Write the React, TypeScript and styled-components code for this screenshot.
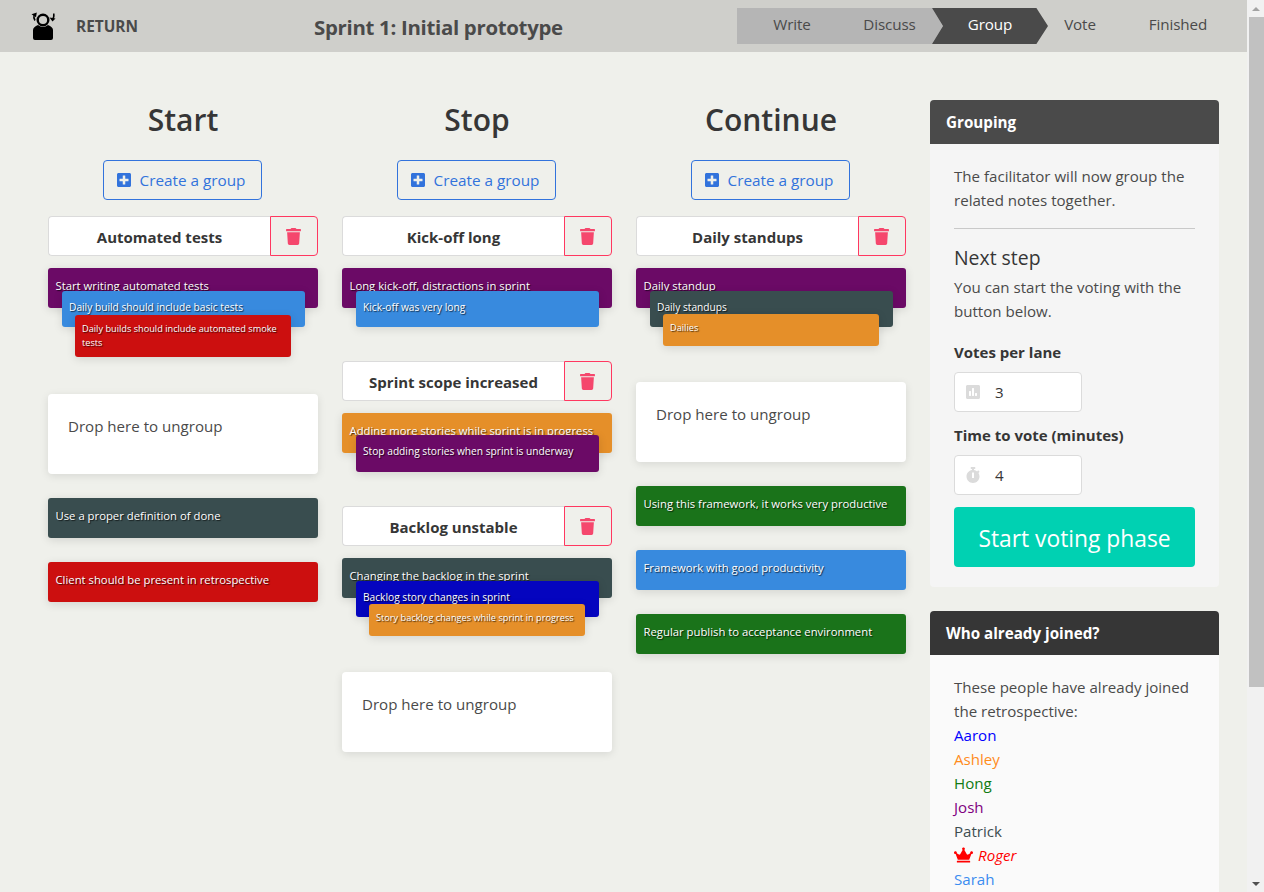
import React from "react";
import styled, { createGlobalStyle } from "styled-components";
import { FaCrown, FaPlusSquare, FaPoll, FaStopwatch, FaTrash } from "react-icons/fa";

const Global = createGlobalStyle`
  html, body { margin: 0; padding: 0; background: #eff0eb; }
  body { font-family: "Open Sans", "Noto Sans", "Liberation Sans", sans-serif; font-size: 15.1px; line-height: 24px; color: #4a4a4a; }
  * { box-sizing: border-box; }
`;

const ScrollBar = styled.div`
  position: fixed;
  top: 0;
  right: 0;
  bottom: 0;
  width: 17px;
  background: #f1f1f1;
  display: flex;
  flex-direction: column;
  align-items: flex-end;
  z-index: 5;
`;
const ScrollArrow = styled.div<{ $up?: boolean }>`
  width: 17px;
  height: 17px;
  flex: none;
  display: flex;
  align-items: center;
  justify-content: center;
  &::before {
    content: "";
    border-left: 4px solid transparent;
    border-right: 4px solid transparent;
    ${(p) => (p.$up ? "border-bottom: 4px solid #a3a3a3;" : "border-top: 4px solid #505050;")}
  }
`;
const ScrollThumb = styled.div`
  width: 15px;
  height: 670px;
  background: #c1c1c1;
`;
const ScrollRest = styled.div`
  flex: 1;
`;

const Header = styled.header`
  height: 52px;
  background: #cfcfcb;
  display: flex;
  align-items: center;
  padding: 0 20px 0 30px;
`;
const Return = styled.a`
  display: flex;
  align-items: center;
  gap: 18px;
  font-weight: 700;
  font-size: 15.4px;
  color: #4a4a4a;
  width: 284px;
`;
const ReturnLabel = styled.span`
  padding-top: 2px;
`;
const Title = styled.h1`
  margin: 2px 0 0;
  font-size: 20.4px;
  line-height: 28px;
  font-weight: 700;
  color: #4a4a4a;
  letter-spacing: -0.3px;
  flex: 1;
`;
const Steps = styled.div`
  display: flex;
  height: 36px;
  width: 507px;
`;
const Step = styled.div<{ $w: number; $state: "active" | "todo" }>`
  width: ${(p) => p.$w}px;
  padding-bottom: 5px;
  display: flex;
  align-items: center;
  justify-content: center;
  font-size: 15.2px;
  letter-spacing: -0.1px;
  color: ${(p) => (p.$state === "active" ? "#fff" : "#4a4a4a")};
  background: ${(p) => (p.$state === "active" ? "#4a4a4a" : "transparent")};
  ${(p) => p.$state === "active" && "clip-path: polygon(0 0, 90% 0, 100% 50%, 90% 100%, 0 100%, 9.5% 50%);"}
`;
const DoneLane = styled.div`
  display: flex;
  width: 206px;
  height: 36px;
  background: #b5b5b5;
  clip-path: polygon(0 0, 195px 0, 206px 50%, 195px 100%, 0 100%);
  margin-right: -11px;
`;
const Main = styled.main`
  display: flex;
  gap: 24px;
  padding: 48px 28px 48px 48px;
  min-height: 1090px;
  align-items: flex-start;
`;
const Lane = styled.section`
  width: 270px;
  display: flex;
  flex-direction: column;
`;
const LaneTitle = styled.h2`
  margin: 0 0 20px;
  font-size: 30px;
  line-height: 40px;
  font-weight: 600;
  text-align: center;
  color: #363636;
`;
const CreateButton = styled.button`
  align-self: center;
  width: 159px;
  height: 40px;
  margin: 0 2px 16px 0;
  padding: 0 2px 0 0;
  display: flex;
  align-items: center;
  justify-content: center;
  gap: 9px;
  border: 1px solid #3273dc;
  border-radius: 4px;
  background: transparent;
  color: #3273dc;
  font-family: inherit;
  font-size: 15.3px;
  svg { width: 14px; height: 16px; }
`;
const GroupHead = styled.div`
  display: flex;
  height: 40px;
  margin-bottom: 12px;
`;
const GroupName = styled.div`
  flex: 1;
  display: flex;
  align-items: center;
  justify-content: center;
  padding-top: 2px;
  background: #fff;
  border: 1px solid #dbdbdb;
  border-right: none;
  border-radius: 4px 0 0 4px;
  font-size: 15px;
  font-weight: 700;
  color: #363636;
`;
const DeleteButton = styled.button`
  width: 48px;
  padding: 0 1px 0 0;
  display: flex;
  align-items: center;
  justify-content: center;
  background: transparent;
  border: 1px solid #ff3860;
  border-radius: 0 4px 4px 0;
  color: #f5476d;
  svg { width: 15px; height: 17px; }
`;
const Stack = styled.div<{ $after: number }>`
  display: flex;
  flex-direction: column;
  margin-bottom: ${(p) => p.$after}px;
`;
const Note = styled.div<{ $bg: string; $level: number; $h: number; $over: number }>`
  background: ${(p) => p.$bg};
  height: ${(p) => p.$h}px;
  margin: ${(p) => -p.$over}px ${(p) => p.$level * 13.5}px 0;
  padding: ${(p) => [9, 7, 7][p.$level]}px ${(p) => [7.5, 7.5, 7][p.$level]}px 0;
  border-radius: 3px;
  color: #fff;
  font-size: ${(p) => [11.3, 10.2, 9.2][p.$level]}px;
  line-height: ${(p) => [18, 18, 14][p.$level]}px;
  text-shadow: 1px 1px 1px rgba(0, 0, 0, 0.7);
  box-shadow: 0 2px 10px rgba(10, 10, 10, 0.12);
  overflow: hidden;
  position: relative;
`;
const LooseNote = styled(Note)`
  margin: 0 0 24px;
`;
const DropZone = styled.div`
  height: 80px;
  background: #fff;
  border-radius: 4px;
  padding: 20px;
  margin-bottom: 24px;
  box-shadow: 0 2px 8px rgba(10, 10, 10, 0.1);
  color: #4a4a4a;
`;
const Side = styled.aside`
  width: 289px;
  display: flex;
  flex-direction: column;
  gap: 24px;
`;
const Panel = styled.section<{ $bg: string }>`
  background: ${(p) => p.$bg};
  border-radius: 4px;
  overflow: hidden;
`;
const PanelHead = styled.h3<{ $bg: string }>`
  margin: 0;
  height: 44px;
  padding: 0 16px;
  display: flex;
  align-items: center;
  background: ${(p) => p.$bg};
  color: #fff;
  font-size: 15.2px;
  font-weight: 700;
`;
const PanelBody = styled.div`
  padding: 20px 24px;
`;
const Para = styled.p`
  margin: 0;
`;
const Rule = styled.hr`
  border: none;
  height: 1px;
  background: #c9c9c9;
  margin: 16px 0 15px;
`;
const NextStep = styled.h4`
  margin: 0 0 4px;
  font-size: 19.4px;
  line-height: 27px;
  font-weight: 400;
  color: #363636;
`;
const Label = styled.div<{ $top: number }>`
  font-weight: 700;
  color: #363636;
  margin: ${(p) => p.$top}px 0 8px;
  font-size: 15px;
`;
const InputBox = styled.div`
  width: 128px;
  height: 40px;
  background: #fff;
  border: 1px solid #dbdbdb;
  border-radius: 4px;
  display: flex;
  align-items: center;
  gap: 15px;
  padding-left: 11px;
  color: #363636;
  svg { width: 14px; height: 16px; color: #dbdbdb; }
`;
const StartButton = styled.button`
  width: 100%;
  height: 60px;
  margin-top: 12px;
  padding: 3px 0 0;
  border: none;
  border-radius: 4px;
  background: #00d1b2;
  color: #fff;
  font-family: inherit;
  font-size: 22.8px;
`;
const NameRow = styled.div<{ $c: string; $italic?: boolean }>`
  color: ${(p) => p.$c};
  font-style: ${(p) => (p.$italic ? "italic" : "normal")};
  display: flex;
  align-items: center;
  gap: 5px;
  svg { width: 19px; height: 16px; }
`;

const C = { purple: "#6b0a66", blue: "#388ade", red: "#cc0f0f", slate: "#394d4f", orange: "#e58f29", green: "#1a731a", navy: "#0505bf" };

type N = { t: string; c: string; h: number; over?: number };
type Item =
  | { kind: "group"; name: string; after: number; notes: N[] }
  | { kind: "drop" }
  | { kind: "note"; t: string; c: string };

const lanes: { title: string; items: Item[] }[] = [
  {
    title: "Start",
    items: [
      { kind: "group", name: "Automated tests", after: 37, notes: [
        { t: "Start writing automated tests", c: C.purple, h: 40 },
        { t: "Daily build should include basic tests", c: C.blue, h: 36, over: 17 },
        { t: "Daily builds should include automated smoke tests", c: C.red, h: 42, over: 12 },
      ] },
      { kind: "drop" },
      { kind: "note", t: "Use a proper definition of done", c: C.slate },
      { kind: "note", t: "Client should be present in retrospective", c: C.red },
    ],
  },
  {
    title: "Stop",
    items: [
      { kind: "group", name: "Kick-off long", after: 34, notes: [
        { t: "Long kick-off, distractions in sprint", c: C.purple, h: 40 },
        { t: "Kick-off was very long", c: C.blue, h: 36, over: 17 },
      ] },
      { kind: "group", name: "Sprint scope increased", after: 34, notes: [
        { t: "Adding more stories while sprint is in progress", c: C.orange, h: 40 },
        { t: "Stop adding stories when sprint is underway", c: C.purple, h: 37, over: 18 },
      ] },
      { kind: "group", name: "Backlog unstable", after: 36, notes: [
        { t: "Changing the backlog in the sprint", c: C.slate, h: 40 },
        { t: "Backlog story changes in sprint", c: C.navy, h: 36, over: 17 },
        { t: "Story backlog changes while sprint in progress", c: C.orange, h: 32, over: 13 },
      ] },
      { kind: "drop" },
    ],
  },
  {
    title: "Continue",
    items: [
      { kind: "group", name: "Daily standups", after: 36, notes: [
        { t: "Daily standup", c: C.purple, h: 40 },
        { t: "Daily standups", c: C.slate, h: 36, over: 17 },
        { t: "Dailies", c: C.orange, h: 32, over: 13 },
      ] },
      { kind: "drop" },
      { kind: "note", t: "Using this framework, it works very productive", c: C.green },
      { kind: "note", t: "Framework with good productivity", c: C.blue },
      { kind: "note", t: "Regular publish to acceptance environment", c: C.green },
    ],
  },
];

const people = [
  { n: "Aaron", c: "#0000ff" },
  { n: "Ashley", c: "#ff8c1a" },
  { n: "Hong", c: "#117a11" },
  { n: "Josh", c: "#800080" },
  { n: "Patrick", c: "#3d4d50" },
  { n: "Roger", c: "#ff0000", lead: true },
  { n: "Sarah", c: "#3b8cf0" },
];

const Logo = () => (
  <svg width="28" height="30" viewBox="0 0 28 30" fill="none">
    <path d="M3 19c0-2 2-4 5-5q5 4 10 0c3 1 5 3 5 5v8a2 2 0 0 1-2 2H5a2 2 0 0 1-2-2z" fill="#000" />
    <circle cx="13" cy="9" r="5.300" stroke="#000" strokeWidth="2.400" />
    <path d="M5 9.500C3.800 7.500 3.500 5.500 4.200 3.500" stroke="#000" strokeWidth="1.500" />
    <path d="M1.500 3.200 6.800 1.600 6 6.200z" fill="#000" />
    <path d="M22 9c1.500-1.500 2.200-3.500 1.800-6.500" stroke="#000" strokeWidth="1.500" />
    <path d="M19.500 6.500 22.500 10.500 25.500 7.500z" fill="#000" />
  </svg>
);

export default function App() {
  return (
    <>
      <Global />
      <Header>
        <Return><Logo /><ReturnLabel>RETURN</ReturnLabel></Return>
        <Title>Sprint 1: Initial prototype</Title>
        <Steps>
          <DoneLane>
            <Step $w={110} $state="todo">Write</Step>
            <Step $w={85} $state="todo">Discuss</Step>
          </DoneLane>
          <Step $w={116} $state="active">Group</Step>
          <Step $w={64} $state="todo">Vote</Step>
          <Step $w={132} $state="todo">Finished</Step>
        </Steps>
      </Header>
      <Main>
        {lanes.map((l) => (
          <Lane key={l.title}>
            <LaneTitle>{l.title}</LaneTitle>
            <CreateButton><FaPlusSquare />Create a group</CreateButton>
            {l.items.map((it, i) => {
              if (it.kind === "drop") return <DropZone key={i}>Drop here to ungroup</DropZone>;
              if (it.kind === "note")
                return <LooseNote key={i} $bg={it.c} $level={0} $h={40} $over={0}>{it.t}</LooseNote>;
              return (
                <div key={i}>
                  <GroupHead>
                    <GroupName>{it.name}</GroupName>
                    <DeleteButton aria-label="Delete"><FaTrash /></DeleteButton>
                  </GroupHead>
                  <Stack $after={it.after}>
                    {it.notes.map((n, j) => (
                      <Note key={j} $bg={n.c} $level={j} $h={n.h} $over={n.over ?? 0}>{n.t}</Note>
                    ))}
                  </Stack>
                </div>
              );
            })}
          </Lane>
        ))}
        <Side>
          <Panel $bg="#f5f5f5">
            <PanelHead $bg="#4a4a4a">Grouping</PanelHead>
            <PanelBody>
              <Para>The facilitator will now group the related notes together.</Para>
              <Rule />
              <NextStep>Next step</NextStep>
              <Para>You can start the voting with the button below.</Para>
              <Label $top={17}>Votes per lane</Label>
              <InputBox><FaPoll />3</InputBox>
              <Label $top={11}>Time to vote (minutes)</Label>
              <InputBox><FaStopwatch />4</InputBox>
              <StartButton>Start voting phase</StartButton>
            </PanelBody>
          </Panel>
          <Panel $bg="#fafafa">
            <PanelHead $bg="#363636">Who already joined?</PanelHead>
            <PanelBody>
              <Para>These people have already joined the retrospective:</Para>
              {people.map((p) => (
                <NameRow key={p.n} $c={p.c} $italic={p.lead}>
                  {p.lead && <FaCrown />}
                  {p.n}
                </NameRow>
              ))}
            </PanelBody>
          </Panel>
        </Side>
      </Main>
      <ScrollBar>
        <ScrollArrow $up />
        <ScrollThumb />
        <ScrollRest />
        <ScrollArrow />
      </ScrollBar>
    </>
  );
}
